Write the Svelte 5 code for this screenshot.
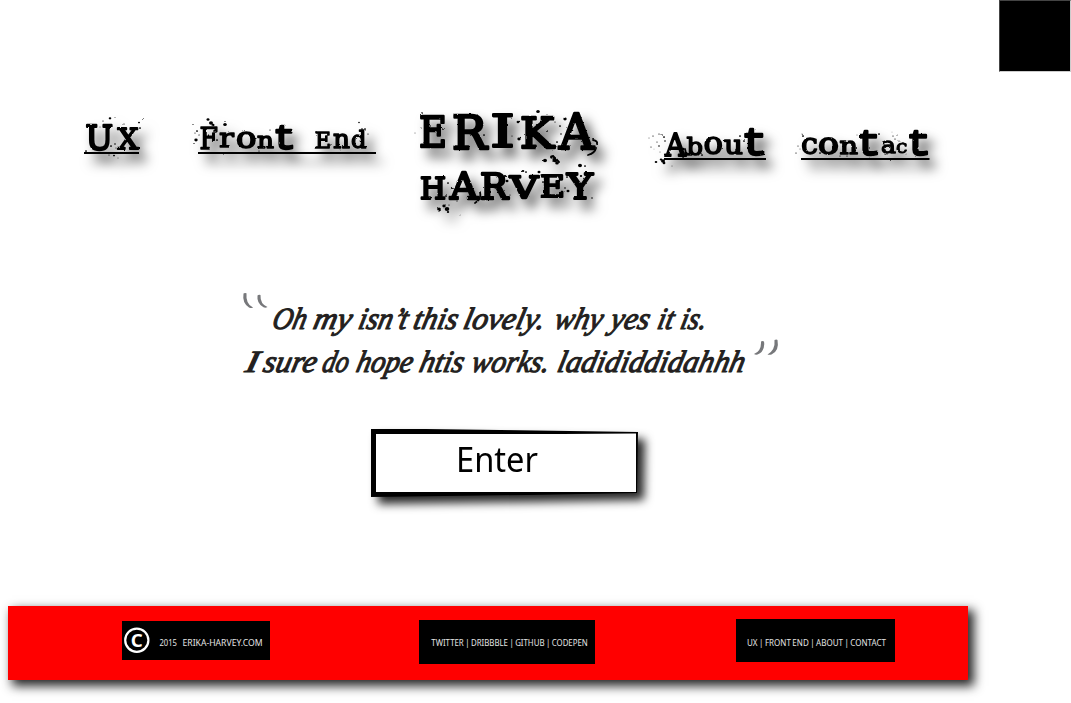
<script>
  const ratio = { o: 0.56, n: 0.54, r: 0.54, u: 0.54, a: 0.56, c: 0.56, t: 0.69, b: 0.77, d: 0.77 };
  // letter: [character, left, right, top, baseline]
  const links = [
    {
      cls: 'ux', w: 55, line: 52,
      letters: [['U', 1.5, 29, 25, 50], ['X', 33.5, 54.5, 28, 49]],
      dots: [[19, 21, .7], [26, 18.3, 1.3], [31, 17.5, .5], [40, 24, .7], [55, 22.5, 1], [59, 18.5, .7], [56, 28, 1], [27, 46, 1], [31, 44, .8], [16, 27, .5], [30, 55.5, 1], [34, 58, .5], [25, 55, .6], [2, 51, 1]]
    },
    {
      cls: 'front', w: 178, line: 52,
      letters: [['F', 1.5, 20, 27, 49], ['r', 21, 36, 32, 46.5], ['o', 38, 58.5, 31, 48], ['n', 59, 76, 35, 47.5], ['t', 75, 98, 24, 48.5], ['E', 117, 133, 31, 47.5], ['n', 135, 152, 34, 48], ['d', 153, 168.5, 30, 48]],
      dots: [[10, 19.5, 1.5], [13, 23, 2], [15, 25, 1.5], [27, 24.5, 1.8], [27, 21.5, .6], [-5, 24.5, .6], [-1, 31, 1], [-3, 33, .6], [-2, 40, 1.7], [-4, 43.5, .7], [1, 35, .6], [17, 31, 1.8], [19, 40, 1], [26, 54, .8], [72, 30, .7], [61, 51, .7], [133, 45, .8], [142, 50, .5], [161, 22.5, .8], [164, 29, .9], [167, 29, 1], [170, 34, .7], [118, 32, 1], [150, 47, .7]]
    }
  ];
  const brand = {
    cls: 'brand', w: 180,
    letters: [['E', 0, 28, 16, 47], ['R', 33, 68, 14, 48.5], ['I', 71, 96, 14.5, 47], ['K', 101, 135, 16.5, 47.5], ['A', 140, 175, 13, 49], ['H', 1, 27, 77, 98.5], ['A', 31, 59, 72, 99], ['R', 61, 89, 73, 98.5], ['V', 91, 119, 76, 98], ['E', 121, 146, 74.5, 96.5], ['Y', 148, 174, 73, 98.5]],
    dots: [[3, 13, 1], [-4, 33, .5], [2, 28, .7], [24, 29, 1], [65, 35, 1], [93, 36, .6], [99, 22, 1.4], [100, 39, 1.7], [119, 11.5, 1.8], [118, 25, 1.2], [125, 18, .8], [128, 31, 1], [136, 22, .7], [141, 26, 1], [142, 34, .8], [146, 19, 1.7], [138, 42, 1], [126, 60.5, 2], [133, 57, 2], [136, 60, 2.6], [138, 63, 1.8], [104, 71, 1.3], [107, 72, 1], [86, 76, 1.3], [88, 81, 1.5], [29, 83, 1], [33, 88, 1.2], [27, 96, 1], [20, 109, 1.9], [25, 106, 1.7], [28, 109, 2.3], [29, 112, 1.2], [41, 115, .5], [62, 99, 1], [91, 95, .6], [120, 72, 1.5], [124, 82, 1], [138, 83, .8], [148, 77, 1], [146, 88, .8], [149, 91, 1.5], [161, 65.5, 2], [166, 66, 1], [173, 98, .8], [162, 76, 1.2], [30, 105, .7], [119, 27, .6], [132, 17, .6], [38, 101, .7]],
    nicks: ['M174 40q5 1 4 4', 'M177 48q-1 5-8 7', 'M61 92q2 7-5 11', 'M134 56l6 6']
  };
  const rest = [
    {
      cls: 'about', w: 102, line: 58,
      letters: [['A', 1, 22, 33, 55.5], ['b', 22.5, 39, 37, 55], ['o', 39.5, 59, 36, 54], ['u', 60, 79, 39, 53.5], ['t', 77.5, 103.5, 28, 55]],
      dots: [[-15, 38, .5], [-11, 36, .7], [-5, 34, .7], [-2, 35, .8], [-7, 42, .6], [-13, 47, .6], [-5, 46, .8], [0, 37, 1], [1, 41, .8], [-8, 62, 1.3], [-3, 59.5, 1.3], [-1, 61, 2], [0, 63, 1.4], [8, 66, .5], [19, 49, 1.6], [22, 53, 1.6], [38, 55, 1], [76, 36, 1], [80, 41, 1], [24, 38, .8], [-10, 49, .4], [-4, 52, .5]],
      nicks: ['M21 49q2 5-2 8']
    },
    {
      cls: 'contact', w: 128.5, line: 58,
      letters: [['c', 0, 17, 37, 54], ['o', 17, 38, 37, 54], ['n', 38.5, 57, 40, 53.5], ['t', 55.5, 80, 29, 55], ['a', 80, 95, 40, 52.5], ['c', 95, 106.5, 42, 52.5], ['t', 105.5, 130, 29, 55]],
      dots: [[2, 36, 1], [1, 34, .5], [-3, 46, .6], [-5, 53, .7], [-1, 49, .5], [19, 53, 1], [39, 56, .7], [46, 56, .7], [56, 35, .5], [78, 34, 1], [92, 36, .7], [96, 35, .6], [94, 39, .7], [98, 41, .6], [91, 32, .4], [86, 54, .7], [88, 60, 1], [102, 43, .8], [105, 54, .5], [96, 49, .6]]
    }
  ];
  const marks = [...links, brand, ...rest];
  const weight = (ch, l, r) => {
    if (ch === 't') return 2.4;
    return Math.min(2.6, Math.max(0.9, (r - l) * 0.085));
  };
  const quote = [
    [['Oh', 30, 64], ['my', 71, 109], ['isn’t', 116, 165], ['this', 171, 215], ['lovely.', 221, 302], ['why', 312, 360], ['yes', 368, 407], ['it', 415, 431], ['is.', 438, 464]],
    [['I', 3, 16], ['sure', 21, 74], ['do', 80, 106], ['hope', 114, 170], ['htis', 177, 221], ['works.', 229, 307], ['ladididdidahhh', 315, 502]]
  ];
</script>

<div class="page">
  <div class="top"><div class="square"></div></div>

  <nav>
    {#each marks as m}
      <a class={m.cls} href="#top">
        <svg width={m.w} height="125" viewBox={`0 0 ${m.w} 125`}>
          <defs>
            <filter id={`rough-${m.cls}`} x="-15%" y="-10%" width="130%" height="120%">
              <feTurbulence type="fractalNoise" baseFrequency=".3" numOctaves="2" seed="4" />
              <feDisplacementMap in="SourceGraphic" scale="2" xChannelSelector="R" yChannelSelector="G" />
            </filter>
          </defs>
          <g filter={`url(#rough-${m.cls})`}>
            {#each m.letters as [ch, l, r, t, b]}
              <text class="type" class:mono={ch === 't'} x={l} y={b} font-size={(b - t) / (ratio[ch] ?? 0.73)} stroke-width={weight(ch, l, r)} textLength={r - l} lengthAdjust="spacingAndGlyphs">{ch}</text>
            {/each}
            {#each m.dots as [x, y, r]}
              <ellipse cx={x} cy={y} rx={r} ry={r * 0.85} />
            {/each}
            {#each m.nicks ?? [] as d}
              <path class="nick" {d} />
            {/each}
          </g>
          {#if m.line}<rect x="0" y={m.line} width={m.w} height="2" />{/if}
        </svg>
      </a>
    {/each}
  </nav>

  <blockquote>
    <svg width="540" height="100" viewBox="0 0 540 100">
      <g class="marks">
        <path d="M2.5 3.5Q3.5 2.5 5.5 3.2Q4.5 14 12 17.5Q10.5 18.5 8 17.5Q1 13 2.5 3.5Z" />
        <path d="M16.5 5.5Q17.5 4.5 19.5 5Q19 14 26.5 17Q24.5 18.3 22.5 17.3Q15.5 13.5 16.5 5.5Z" />
        <path d="M520 51.5Q521.5 50.5 523 51.5Q524.5 61 516.5 64.5Q514.5 65 513 64Q520.5 61 520 51.5Z" />
        <path d="M533.5 50Q535.5 49 536.5 50Q538.5 61 530.5 64.5Q528 65.2 526.5 64.5Q534.5 60 533.5 50Z" />
      </g>
      {#each quote as words, i}
        {#each words as [word, l, r]}
          <text class="script" transform={`translate(${l} ${39 + i * 43}) skewX(-13)`} textLength={r - l} lengthAdjust="spacingAndGlyphs">{word}</text>
        {/each}
      {/each}
    </svg>
  </blockquote>

  <button>
    <svg width="269" height="70" viewBox="0 0 269 70">
      <path d="M1 0L56 0L268 3L267 64L158 66L1 68Z" />
      <path class="inside" d="M6 5L193 5L266 4.5L266 63L138 63L6 63Z" />
      <text x="86" y="42.5" font-size="35" textLength="82" lengthAdjust="spacingAndGlyphs">Enter</text>
    </svg>
  </button>

  <footer>
    <div class="box copy">
      <svg width="148" height="39">
        <circle cx="14.8" cy="19.2" r="11.6" />
        <text class="letter" x="8.7" y="25.6" textLength="12" lengthAdjust="spacingAndGlyphs">C</text>
        <text x="37.5" y="25" textLength="17.5" lengthAdjust="spacingAndGlyphs">2015</text>
        <text x="60.5" y="25" textLength="80" lengthAdjust="spacingAndGlyphs">ERIKA-HARVEY.COM</text>
      </svg>
    </div>
    <div class="box social">
      <svg width="176" height="44"><text x="12.3" y="26" textLength="156.5" lengthAdjust="spacingAndGlyphs">TWITTER | DRIBBBLE | GITHUB | CODEPEN</text></svg>
    </div>
    <div class="box site">
      <svg width="159" height="43"><text x="11" y="27" textLength="139" lengthAdjust="spacingAndGlyphs">UX | FRONT END | ABOUT | CONTACT</text></svg>
    </div>
  </footer>
</div>

<style>
  :global(body) { background: #fff; overflow: hidden; }
  .page { width: 1071px; height: 703px; overflow: hidden; box-sizing: border-box; font-family: "Noto Sans", sans-serif; }
  svg { display: block; overflow: visible; }
  .top { display: flex; justify-content: flex-end; height: 100px; }
  .square { box-sizing: border-box; width: 72px; height: 72px; background: #000; border: 1px solid #444; border-right-color: #ccc; border-bottom-color: #ccc; }
  nav { display: flex; height: 190px; padding-left: 83.5px; box-sizing: border-box; }
  nav a { color: #000; text-decoration: none; filter: drop-shadow(7px 9px 6px rgba(0, 0, 0, .65)); }
  .front { margin-left: 59px; }
  .brand { margin-left: 43.5px; }
  .about { margin-left: 65px; }
  .contact { margin-left: 34.5px; }
  .type { font-family: "DejaVu Serif", serif; stroke: #000; stroke-linejoin: round; }
  .mono { font-family: "Liberation Mono", monospace; }
  .nick { fill: none; stroke: #000; stroke-width: 1.8; stroke-linecap: round; }
  blockquote { margin: 0 0 0 241px; height: 139px; }
  .marks { fill: #77787b; }
  .script { font: italic 31px "Liberation Serif", serif; fill: #231f20; stroke: #231f20; stroke-width: 1.1; stroke-linejoin: round; }
  button { display: block; margin: 0 0 0 370px; padding: 0; border: 0; background: none; width: 269px; height: 70px; font: inherit; filter: drop-shadow(7px 7px 5px rgba(0, 0, 0, .85)); }
  .inside { fill: #fff; }
  footer { display: flex; align-items: flex-start; box-sizing: border-box; width: 960px; height: 74px; margin: 107px 0 0 8px; padding-left: 114px; background: red; box-shadow: 5px 5px 10px 1px rgba(0, 0, 0, .85); }
  .box { background: #000; }
  .box text { fill: #e4e4e4; font-size: 9px; word-spacing: -0.7px; }
  .box .letter { font-size: 17px; font-weight: 700; fill: #fff; }
  circle { fill: none; stroke: #fff; stroke-width: 2.2; }
  .copy { margin-top: 15px; }
  .social { margin: 14px 0 0 149px; }
  .site { margin: 13px 0 0 141px; }
</style>
